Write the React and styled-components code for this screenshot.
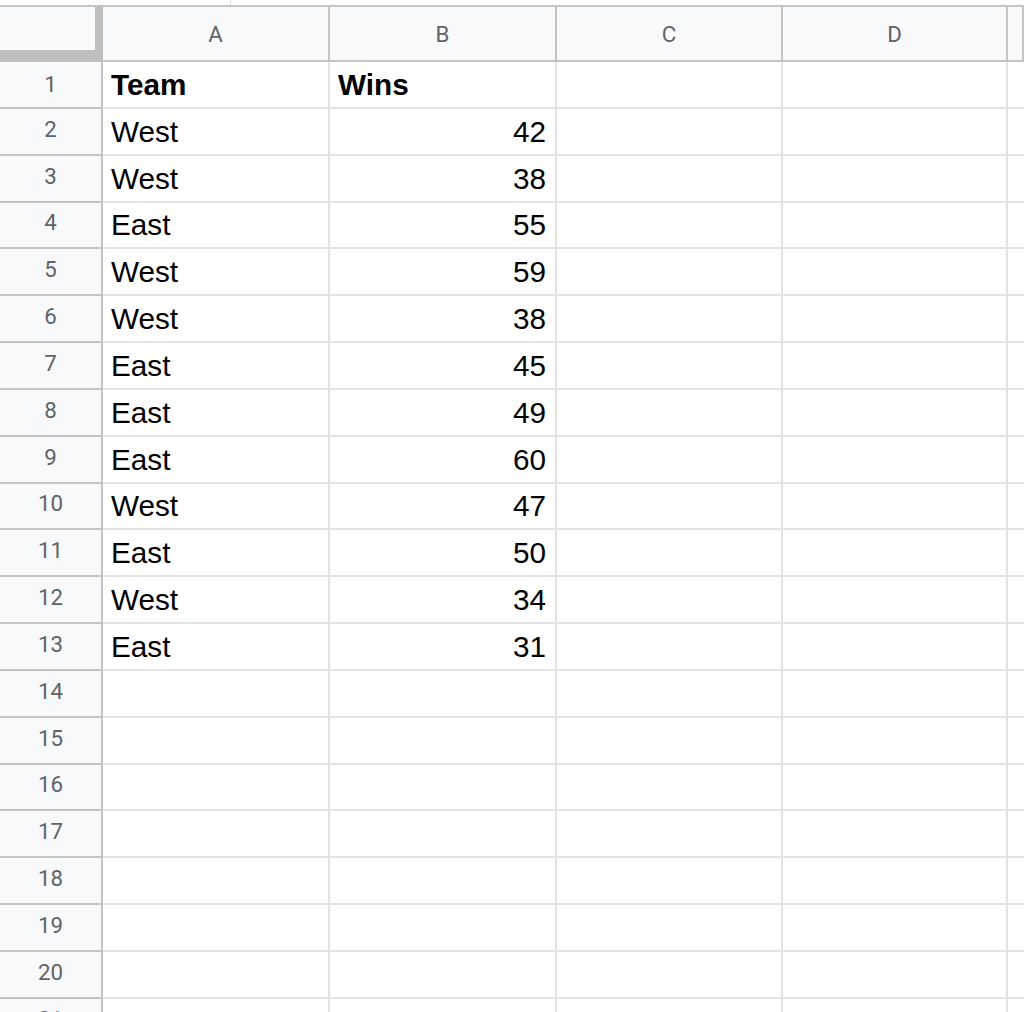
import React from "react";
import styled, { createGlobalStyle } from "styled-components";

const Global = createGlobalStyle`
  html, body { margin: 0; padding: 0; background: #ffffff; overflow: hidden; }
  body { width: 1024px; height: 1012px; }
`;

const HEADER_LINE = "#c4c4c4";
const CELL_LINE = "#e2e3e3";
const HEADER_BG = "#f8f9fa";

const Page = styled.div`
  width: 1024px;
  height: 1012px;
  overflow: hidden;
  display: flex;
  flex-direction: column;
`;

const TopStrip = styled.div`
  height: 5px;
  flex: 0 0 5px;
  padding-left: 230px;
  display: flex;
`;

const Tick = styled.div`
  width: 1px;
  height: 5px;
  background: #dadce0;
`;

const Sheet = styled.div`
  border-top: 2px solid ${HEADER_LINE};
  display: flex;
  flex-direction: column;
`;

const Row = styled.div`
  display: flex;
  height: ${(p) => p.$h}px;
  flex: 0 0 ${(p) => p.$h}px;
`;

const Corner = styled.div`
  box-sizing: border-box;
  width: 103px;
  flex: 0 0 103px;
  height: 100%;
  background: ${HEADER_BG};
  border-right: 8px solid #bfbfbf;
  border-bottom: 12px solid #bfbfbf;
`;

const ColHeader = styled.div`
  box-sizing: border-box;
  width: ${(p) => (p.$w ? `${p.$w}px` : "auto")};
  flex: ${(p) => (p.$w ? `0 0 ${p.$w}px` : "1 1 auto")};
  height: 100%;
  background: ${HEADER_BG};
  border-right: 2px solid ${HEADER_LINE};
  border-bottom: 2px solid ${HEADER_LINE};
  display: flex;
  align-items: center;
  justify-content: center;
  font-family: Roboto, "Liberation Sans", Arial, sans-serif;
  font-size: 22.3px;
  color: #5f6368;
`;

const RowHeader = styled.div`
  box-sizing: border-box;
  width: 103px;
  flex: 0 0 103px;
  height: 100%;
  background: ${HEADER_BG};
  border-right: 2px solid ${HEADER_LINE};
  border-bottom: 2px solid ${HEADER_LINE};
  padding-bottom: ${(p) => (p.$first ? 2 : 6)}px;
  display: flex;
  align-items: center;
  justify-content: center;
  font-family: Roboto, "Liberation Sans", Arial, sans-serif;
  font-size: 22.3px;
  color: #5f6368;
`;

const Cell = styled.div`
  box-sizing: border-box;
  width: ${(p) => (p.$w ? `${p.$w}px` : "auto")};
  flex: ${(p) => (p.$w ? `0 0 ${p.$w}px` : "1 1 auto")};
  height: 100%;
  border-right: 2px solid ${CELL_LINE};
  border-bottom: 2px solid ${CELL_LINE};
  display: flex;
  align-items: flex-end;
  justify-content: ${(p) => (p.$num ? "flex-end" : "flex-start")};
  padding: 0 9px 7px 8px;
  font-family: "Liberation Sans", Arial, sans-serif;
  font-size: 29.7px;
  line-height: 30px;
  font-weight: ${(p) => (p.$bold ? 700 : 400)};
  color: #000000;
  white-space: nowrap;
  overflow: hidden;
`;

const COLS = [
  { key: "A", w: 227 },
  { key: "B", w: 227 },
  { key: "C", w: 226 },
  { key: "D", w: 225 },
  { key: "E", w: 0 },
];

const DATA = [
  ["Team", "Wins"],
  ["West", 42],
  ["West", 38],
  ["East", 55],
  ["West", 59],
  ["West", 38],
  ["East", 45],
  ["East", 49],
  ["East", 60],
  ["West", 47],
  ["East", 50],
  ["West", 34],
  ["East", 31],
];

const boundary = (n) => Math.round(107 + (n - 1) * 46.83);
const rowHeight = (n) => (n === 1 ? 47 : boundary(n) - boundary(n - 1));

export default function App() {
  const rows = Array.from({ length: 22 }, (_, i) => i + 1);
  return (
    <>
      <Global />
      <Page>
        <TopStrip>
          <Tick />
        </TopStrip>
        <Sheet>
          <Row $h={55}>
            <Corner />
            {COLS.map((c) => (
              <ColHeader key={c.key} $w={c.w}>
                {c.key === "E" ? "" : c.key}
              </ColHeader>
            ))}
          </Row>
          {rows.map((n) => {
            const data = DATA[n - 1] || [];
            return (
              <Row key={n} $h={rowHeight(n)}>
                <RowHeader $first={n === 1}>{n}</RowHeader>
                {COLS.map((c, ci) => {
                  const v = data[ci];
                  return (
                    <Cell
                      key={c.key}
                      $w={c.w}
                      $num={typeof v === "number"}
                      $bold={n === 1}
                    >
                      {v !== undefined ? v : ""}
                    </Cell>
                  );
                })}
              </Row>
            );
          })}
        </Sheet>
      </Page>
    </>
  );
}
